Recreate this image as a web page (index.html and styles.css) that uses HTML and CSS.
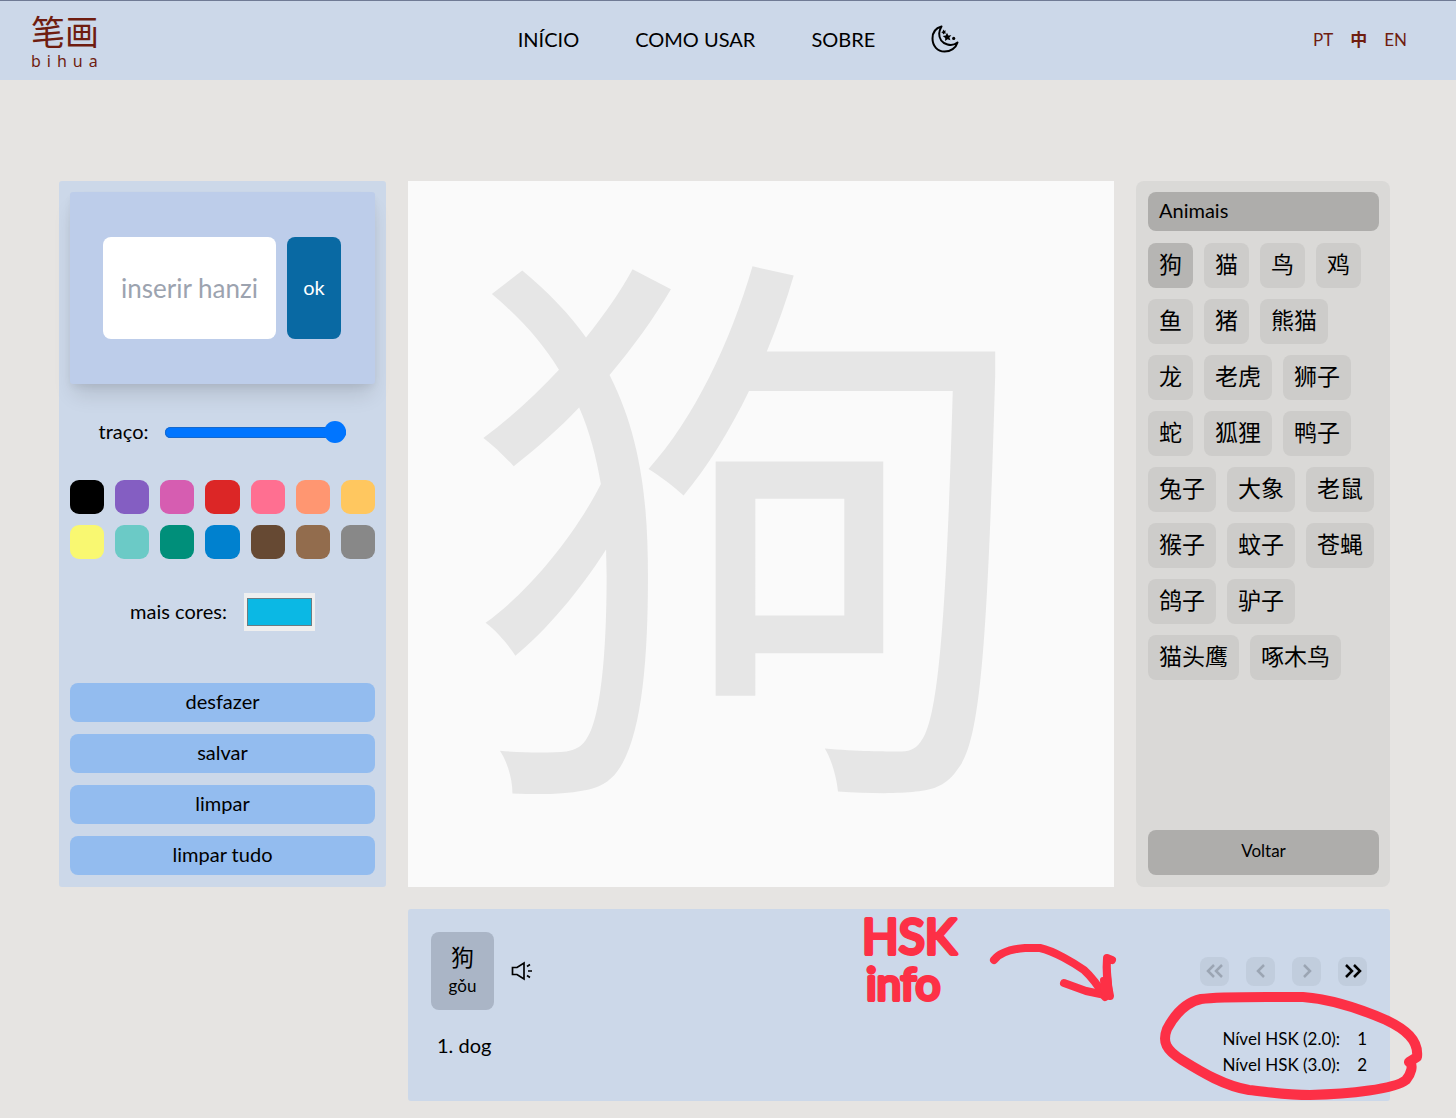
FILE: index.html
```html
<!DOCTYPE html>
<html lang="pt-BR">
<head>
  <meta charset="UTF-8" />
  <meta name="viewport" content="width=device-width, initial-scale=1.0" />
  <title>笔画 bihua</title>
  <link rel="stylesheet" href="styles.css">
</head>
<body>
  <header class="header">
    <a class="logo" href="#">
      <span class="logo-hanzi" lang="zh">笔画</span>
      <span class="logo-name">bihua</span>
    </a>
    <nav class="menu">
      <a href="#">INÍCIO</a>
      <a href="#">COMO USAR</a>
      <a href="#">SOBRE</a>
      <button type="button" class="theme-btn" aria-label="Modo escuro">
        <svg width="28" height="28" viewBox="0 0 28 28">
          <path d="M10.5 1.5C5 3 1.500 7.500 1.500 13.500C1.500 21 6.500 26.500 13.500 26.500C19.500 26.500 25 23 26.500 17.500C23.500 20 20 20.500 16.500 19.500C11 18 8 13.500 8.200 8.500C8.300 5.500 9.500 3.500 10.500 1.500Z" fill="none" stroke="#000" stroke-width="2" stroke-linejoin="round"/>
          <path d="M16 7.800l1.300 2.600 3-.1-1.900 2.200 1 2.800-2.800-1-2.500 1.700.1-3-2.500-1.900 3-.6z"/>
          <path d="M12.200 4.600l1 1.200 1.700-.2-.7 1.500.8 1.400-1.700-.1-1.200 1.200-.4-1.600-1.500-.8 1.500-.8z"/>
          <circle cx="22.700" cy="13.400" r="1.600"/>
        </svg>
      </button>
    </nav>
    <div class="languages">
      <a href="#">PT</a>
      <a href="#" class="lang-zh" lang="zh">中</a>
      <a href="#">EN</a>
    </div>
  </header>

  <main class="container">
    <section class="tools">
      <form class="hanzi-form">
        <input type="text" class="hanzi-input" placeholder="inserir hanzi" aria-label="inserir hanzi" />
        <button type="submit" class="ok-btn">ok</button>
      </form>

      <div class="stroke-row">
        <label for="traco">traço:</label>
        <input type="range" id="traco" min="1" max="30" value="30" />
      </div>

      <div class="palette">
        <button type="button" class="color black" aria-label="preto"></button>
        <button type="button" class="color purple" aria-label="roxo"></button>
        <button type="button" class="color magenta" aria-label="magenta"></button>
        <button type="button" class="color red" aria-label="vermelho"></button>
        <button type="button" class="color pink" aria-label="rosa"></button>
        <button type="button" class="color salmon" aria-label="salmão"></button>
        <button type="button" class="color orange" aria-label="laranja"></button>
        <button type="button" class="color yellow" aria-label="amarelo"></button>
        <button type="button" class="color aqua" aria-label="turquesa"></button>
        <button type="button" class="color green" aria-label="verde"></button>
        <button type="button" class="color blue" aria-label="azul"></button>
        <button type="button" class="color coffee" aria-label="café"></button>
        <button type="button" class="color brown" aria-label="marrom"></button>
        <button type="button" class="color gray" aria-label="cinza"></button>
      </div>

      <div class="more-colors">
        <label for="cores">mais cores:</label>
        <input type="color" id="cores" value="#0bb8e4" />
      </div>

      <div class="actions">
        <button type="button">desfazer</button>
        <button type="button">salvar</button>
        <button type="button">limpar</button>
        <button type="button">limpar tudo</button>
      </div>
    </section>

    <section class="board" lang="zh">狗</section>

    <aside class="category">
      <h2 class="category-title">Animais</h2>
      <div class="words" lang="zh">
        <button type="button" class="active">狗</button>
        <button type="button">猫</button>
        <button type="button">鸟</button>
        <button type="button">鸡</button>
        <button type="button">鱼</button>
        <button type="button">猪</button>
        <button type="button">熊猫</button>
        <button type="button">龙</button>
        <button type="button">老虎</button>
        <button type="button">狮子</button>
        <button type="button">蛇</button>
        <button type="button">狐狸</button>
        <button type="button">鸭子</button>
        <button type="button">兔子</button>
        <button type="button">大象</button>
        <button type="button">老鼠</button>
        <button type="button">猴子</button>
        <button type="button">蚊子</button>
        <button type="button">苍蝇</button>
        <button type="button">鸽子</button>
        <button type="button">驴子</button>
        <button type="button">猫头鹰</button>
        <button type="button">啄木鸟</button>
      </div>
      <button type="button" class="back-btn">Voltar</button>
    </aside>

    <section class="info">
      <div class="info-top">
        <button type="button" class="word-card">
          <span class="word-hanzi" lang="zh">狗</span>
          <span class="word-pinyin">gǒu</span>
        </button>
        <button type="button" class="sound-btn" aria-label="Ouvir">
          <svg width="22" height="20" viewBox="0 0 22 20" fill="none" stroke="#000" stroke-width="1.700">
            <path d="M1.500 6.500H6L13 2V18L6 13.500H1.500Z"/>
            <path d="M16 5.500l3-2M17 10h4M16 14.500l3 2"/>
          </svg>
        </button>
        <div class="pager">
          <button type="button" disabled aria-label="Primeiro">
            <svg width="20" height="20" viewBox="0 0 20 20"><path d="M9 4L3 10L9 16M17 4L11 10L17 16"/></svg>
          </button>
          <button type="button" disabled aria-label="Anterior">
            <svg width="20" height="20" viewBox="0 0 20 20"><path d="M13 4L7 10L13 16"/></svg>
          </button>
          <button type="button" disabled aria-label="Próximo">
            <svg width="20" height="20" viewBox="0 0 20 20"><path d="M7 4L13 10L7 16"/></svg>
          </button>
          <button type="button" aria-label="Último">
            <svg width="20" height="20" viewBox="0 0 20 20"><path d="M3 4L9 10L3 16M11 4L17 10L11 16"/></svg>
          </button>
        </div>
      </div>

      <div class="info-bottom">
        <p class="meaning">1. dog</p>
        <dl class="hsk">
          <dt>Nível HSK (2.0):</dt><dd>1</dd>
          <dt>Nível HSK (3.0):</dt><dd>2</dd>
        </dl>
      </div>

      <!-- anotação em vermelho -->
      <svg class="note" width="600" height="218" viewBox="840 900 600 218">
        <g class="note-text">
          <text x="862" y="954" font-size="48">HSK</text>
          <text x="866" y="1000" font-size="44">info</text>
        </g>
        <g class="note-line">
          <path d="M994 960C1000 952 1012 949 1025 948L1040 948C1054 951 1074 963 1084 970C1094 979 1099 987 1105 997" stroke-width="8"/>
          <path d="M1064 983L1086 991L1110 996C1107 983 1106 970 1107 958L1112 960" stroke-width="8"/>
          <path d="M1107 960L1110 996L1104 992L1103 980" stroke-width="6"/>
          <path d="M1409 1062C1414 1065 1411 1074 1406 1080C1395 1089 1350 1094 1310 1095C1285 1095 1269 1092 1249 1090C1225 1086 1203 1073 1182 1060C1166 1050 1162 1042 1167 1029C1175 1014 1187 1002 1201 999C1220 996 1270 997 1303 997C1330 999 1363 1010 1386 1020C1405 1029 1419 1040 1417 1057L1409 1062" stroke-width="10"/>
        </g>
      </svg>
    </section>
  </main>
</body>
</html>
```
FILE: styles.css
```css
* {
  box-sizing: border-box;
}

body {
  margin: 0;
  font-family: Lato, "Noto Sans CJK SC", sans-serif;
  font-size: 20px;
  line-height: 28px;
  background-color: #e6e4e2;
  color: #000;
}

a {
  color: inherit;
  text-decoration: none;
}

button {
  border: none;
  padding: 0 0 3px;
  font-family: inherit;
  font-size: inherit;
  line-height: inherit;
  color: inherit;
  background: none;
  cursor: pointer;
}

svg {
  display: block;
}

/* cabeçalho */
.header {
  display: grid;
  grid-template-columns: 1fr auto 1fr;
  align-items: center;
  height: 80px;
  padding: 0 10px 0 31px;
  border-top: 1px solid #707b95;
  background-color: #ccd8e9;
}

.logo {
  display: flex;
  flex-direction: column;
  gap: 2px;
  padding-top: 4px;
  color: #6f1d10;
}

.logo-hanzi {
  font-size: 34px;
  line-height: 34px;
}

.logo-name {
  font-family: "Noto Sans", sans-serif;
  font-size: 16px;
  line-height: 20px;
  letter-spacing: 6px;
}

.menu {
  display: flex;
  align-items: center;
  gap: 56px;
}

.menu a {
  padding-bottom: 4px;
}

.languages {
  display: flex;
  justify-self: end;
  gap: 17px;
  margin-right: 39px;
  padding-bottom: 2px;
  font-size: 17px;
  color: #6f1d10;
}

.lang-zh {
  font-weight: bold;
}

/* layout principal */
.container {
  display: grid;
  grid-template-columns: 327px minmax(0, 1fr) 254px;
  gap: 22px;
  padding: 101px 66px 17px 59px;
}

/* ferramentas */
.tools {
  display: flex;
  flex-direction: column;
  padding: 11px 11px 12px;
  border-radius: 3px;
  background-color: #ccd8e9;
}

.hanzi-form {
  display: flex;
  gap: 11px;
  height: 192px;
  padding: 45px 34px 45px 33px;
  border-radius: 3px;
  background-color: #bdcdea;
  box-shadow: 0 14px 20px -4px rgba(0,0,0,0.12), 0 4px 8px -2px rgba(0,0,0,0.08);
}

.hanzi-input {
  flex: 1;
  min-width: 0;
  padding: 0;
  border: none;
  border-radius: 8px;
  background-color: #fff;
  font-family: inherit;
  font-size: 26px;
  text-align: center;
}

.hanzi-input::placeholder {
  color: #9ca3af;
}

.ok-btn {
  width: 54px;
  border-radius: 8px;
  background-color: #0969a3;
  color: #fff;
}

.stroke-row {
  display: flex;
  align-items: center;
  justify-content: center;
  gap: 17px;
  height: 96px;
}

.stroke-row label,
.more-colors label {
  padding-bottom: 2px;
}

.stroke-row input {
  appearance: none;
  width: 181px;
  height: 11px;
  margin: 0;
  border-radius: 6px;
  background-color: #0075ff;
  box-shadow: inset 0 0 0 1px #1668cc;
}

.stroke-row input::-webkit-slider-thumb {
  appearance: none;
  width: 22px;
  height: 22px;
  border-radius: 50%;
  background-color: #0075ff;
}

.palette {
  display: grid;
  grid-template-columns: repeat(7, 1fr);
  gap: 11px;
}

.color {
  height: 34px;
  border-radius: 9px;
}

.black { background-color: #000; }
.purple { background-color: #845ec2; }
.magenta { background-color: #d65db1; }
.red { background-color: #dc2626; }
.pink { background-color: #ff6f91; }
.salmon { background-color: #ff9671; }
.orange { background-color: #ffc75f; }
.yellow { background-color: #f9f871; }
.aqua { background-color: #6bcac6; }
.green { background-color: #008f7a; }
.blue { background-color: #0081cf; }
.coffee { background-color: #664933; }
.brown { background-color: #926c4d; }
.gray { background-color: #888; }

.more-colors {
  display: flex;
  align-items: center;
  justify-content: center;
  gap: 17px;
  margin-top: 34px;
}

.more-colors input {
  appearance: none;
  width: 71px;
  height: 38px;
  padding: 0;
  border: none;
  background-color: #efefef;
}

.more-colors input::-webkit-color-swatch-wrapper {
  padding: 5px 3px;
}

.more-colors input::-webkit-color-swatch {
  border: 1px solid #6b7c82;
}

.actions {
  display: flex;
  flex-direction: column;
  gap: 12px;
  margin-top: auto;
}

.actions button {
  height: 39px;
  border-radius: 8px;
  background-color: #93bcef;
}

/* quadro de desenho */
.board {
  display: flex;
  align-items: center;
  justify-content: center;
  aspect-ratio: 1;
  padding: 0 24px 16px 0;
  overflow: hidden;
  background-color: #fafafa;
  color: #e6e6e6;
  font-size: 574px;
  line-height: 1;
}

/* lista de palavras */
.category {
  display: flex;
  flex-direction: column;
  gap: 12px;
  padding: 11px 11px 12px 12px;
  border-radius: 8px;
  background-color: #dad9d7;
}

.category-title {
  margin: 0;
  padding: 0 11px 2px;
  border-radius: 8px;
  background-color: #aeadab;
  font-size: 20px;
  font-weight: normal;
  line-height: 37px;
}

.words {
  display: flex;
  flex-wrap: wrap;
  gap: 11px;
}

.words button {
  height: 45px;
  padding: 0 11px 3px;
  border-radius: 8px;
  background-color: #cdccca;
  font-size: 23px;
}

.words .active {
  background-color: #b6b5b3;
}

.back-btn {
  height: 45px;
  margin-top: auto;
  border-radius: 8px;
  background-color: #aeadab;
  font-size: 17px;
}

/* informações da palavra */
.info {
  position: relative;
  grid-column: 2 / 4;
  min-height: 192px;
  padding: 23px;
  border-radius: 3px;
  background-color: #ccd8e9;
}

.info-top {
  display: flex;
  align-items: center;
  gap: 17px;
}

.info-top button {
  padding: 0;
}

.word-card {
  display: flex;
  flex-direction: column;
  align-items: center;
  justify-content: center;
  gap: 1px;
  width: 63px;
  height: 78px;
  border-radius: 8px;
  background-color: #aab5c6;
}

.word-hanzi {
  font-size: 23px;
}

.word-pinyin {
  font-size: 17px;
}

.pager {
  display: flex;
  gap: 17px;
  margin-left: auto;
}

.pager button {
  display: flex;
  align-items: center;
  justify-content: center;
  width: 29px;
  height: 29px;
  border-radius: 8px;
  background-color: #c1cddd;
}

.pager path {
  fill: none;
  stroke: #000;
  stroke-width: 2.500;
}

.pager button:disabled path {
  stroke: #9ba5b3;
}

.info-bottom {
  display: flex;
  justify-content: space-between;
  margin-top: 16px;
  padding-left: 6px;
}

.meaning {
  margin: 5px 0 0;
}

.hsk {
  display: grid;
  grid-template-columns: auto auto;
  column-gap: 17px;
  margin: 0;
  font-size: 17px;
  line-height: 26px;
}

.hsk dd {
  margin: 0;
}

.note {
  position: absolute;
  top: -9px;
  right: -50px;
  pointer-events: none;
}

.note-text {
  fill: #fd3046;
  stroke: #fd3046;
  stroke-width: 4;
  stroke-linejoin: round;
}

.note-line {
  fill: none;
  stroke: #fd3046;
  stroke-linecap: round;
  stroke-linejoin: round;
}
```
